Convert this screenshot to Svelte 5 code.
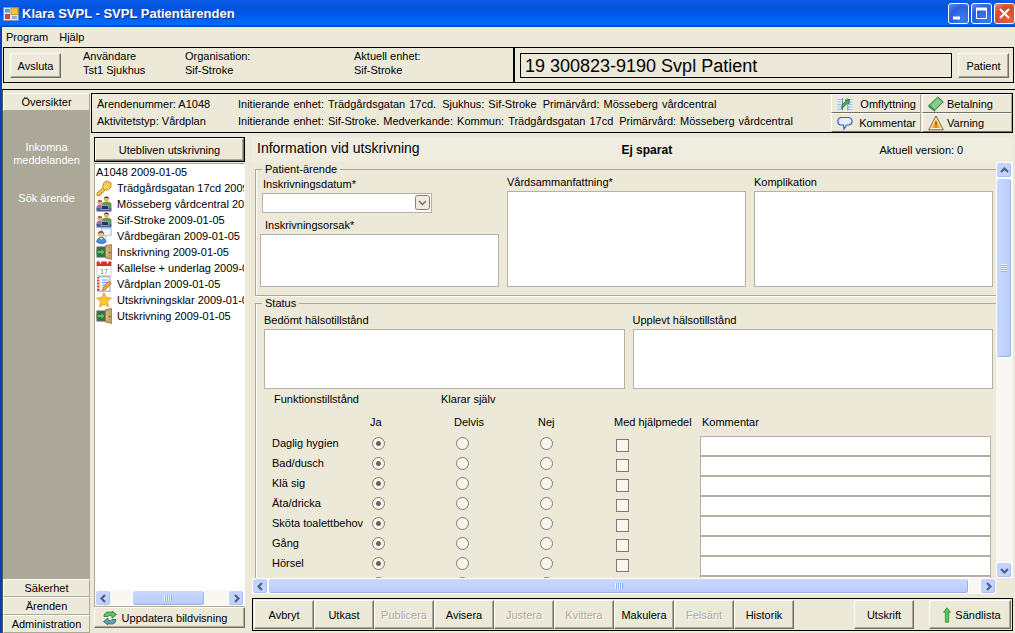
<script lang="ts">
    type TreeItem = { icon: string; text: string };
    type Action = { text: string; disabled?: boolean };

    const tree: TreeItem[] = [
        { icon: "key", text: "Trädgårdsgatan 17cd 2009-01-05" },
        { icon: "people", text: "Mösseberg vårdcentral 2009-01-05" },
        { icon: "people", text: "Sif-Stroke 2009-01-05" },
        { icon: "request", text: "Vårdbegäran 2009-01-05" },
        { icon: "door", text: "Inskrivning 2009-01-05" },
        { icon: "calendar", text: "Kallelse + underlag 2009-01-05" },
        { icon: "plan", text: "Vårdplan 2009-01-05" },
        { icon: "star", text: "Utskrivningsklar 2009-01-05" },
        { icon: "door", text: "Utskrivning 2009-01-05" },
    ];

    const actions: Action[] = [
        { text: "Avbryt" },
        { text: "Utkast" },
        { text: "Publicera", disabled: true },
        { text: "Avisera" },
        { text: "Justera", disabled: true },
        { text: "Kvittera", disabled: true },
        { text: "Makulera" },
        { text: "Felsänt", disabled: true },
        { text: "Historik" },
    ];

    const levels = ["Ja", "Delvis", "Nej"];

    let functions = $state(
        ["Daglig hygien", "Bad/dusch", "Klä sig", "Äta/dricka", "Sköta toalettbehov", "Gång", "Hörsel", ""].map((name) => ({
            name,
            level: "Ja",
            aid: false,
            comment: "",
        })),
    );
</script>

{#snippet icon(name: string)}
    <svg class="icon" width="16" height="16" viewBox="0 0 16 16" aria-hidden="true">
        {#if name === "key"}
            <path d="M7.500 7.500 1 13v2.500h3v-1.500h1.500v-1.500H7l2-2.500" fill="#f6c445" stroke="#c58a1c" />
            <path d="M8 2.500 11 .8l4 2.200v4l-3 3H8.500L6.500 7.500z" fill="#fbd35c" stroke="#c58a1c" />
            <circle cx="11.500" cy="4" r="1.300" fill="#fff" stroke="#c58a1c" stroke-width=".6" />
        {:else if name === "people"}
            <circle cx="10.500" cy="3.200" r="2.600" fill="#e9b27c" />
            <path d="M7.800 3c0-3.500 5.500-3.500 5.500 0l-1-1H9z" fill="#5b3a22" />
            <path d="M6 12V8c0-3 9.500-3 9.500 0v4z" fill="#5d9b4d" />
            <circle cx="4" cy="6.500" r="2.400" fill="#e3a772" />
            <path d="M1.600 6.300c0-3 4.700-3 4.700 0L5.500 5.500h-3z" fill="#8a4a24" />
            <path d="M.5 13v-2c0-3 7-3 7 0v2z" fill="#b06ca0" />
            <path d="M.5 12h15v3.500H.5z" fill="#4a5d9a" />
            <path d="M6 9.500h6l1 4H5z" fill="#26335f" stroke="#a9b9e6" stroke-width=".7" />
        {:else if name === "request"}
            <path d="M5 .7h10.300v6.500H12L9.500 9.500V7.200H7z" fill="#eef6ff" stroke="#8fb4de" stroke-width=".8" />
            <circle cx="5" cy="6.500" r="3" fill="#edbd8a" />
            <path d="M2 6.500c-.5-5 6.500-5 6 0L6.500 5h-3z" fill="#8a5a30" />
            <path d="M.7 14c0-6 9.300-6 9.300 0-2 2-7 2-9.300 0z" fill="#4f8be0" stroke="#2a5cab" stroke-width=".7" />
            <path d="m4 10 1.300 1.800L6.700 10z" fill="#fff" />
        {:else if name === "door"}
            <path d="M.5 2.500h9v11h-9z" fill="#55635a" />
            <path d="M9.500 1.500 15.500.5v15l-6-1.500z" fill="#c9a56a" stroke="#87683a" stroke-width=".7" />
            <path d="M11 4v8" stroke="#e5ca98" />
            <circle cx="13.700" cy="8.500" r=".8" fill="#6b4d20" />
            <path d="m9 8-4-4v2.300H1v3.400h4V12z" fill="#53c653" stroke="#1b6a25" stroke-width=".8" />
        {:else if name === "calendar"}
            <path d="M1 2h14v13.500H1z" fill="#fff" stroke="#c9c2c2" stroke-width=".8" />
            <path d="M.7 1.500h14.600V6H.7z" fill="#d92c2c" />
            <path d="M4.500.5v3M11.500.5v3" stroke="#fff" stroke-width="1.500" />
            <text x="8" y="13.500" text-anchor="middle" font-size="7" fill="#777">17</text>
        {:else if name === "plan"}
            <path d="M2.500.8H14v14.400H2.500z" fill="#fff" stroke="#8e9bb8" />
            <path d="M1 1h2.500v14H1z" fill="#d0483b" />
            <path d="M1 3h3M1 6h3M1 9h3M1 12h3" stroke="#fff" />
            <path d="M6 4h6M6 6.500h6M6 9h3" stroke="#6b9be0" />
            <path d="m6.500 14.500.8-3.500 5.500-6 2.500 2.300-5.500 6z" fill="#f4a43c" stroke="#a9601b" stroke-width=".7" />
        {:else if name === "star"}
            <path d="m8 .8 2.200 4.700 5.100.6-3.800 3.500 1 5.200L8 12.300l-4.500 2.500 1-5.200L.7 6.100l5.100-.6z" fill="#fcc62f" stroke="#dc9a18" stroke-width=".8" />
        {:else if name === "move"}
            <path d="M.5 2H6v12.500H.5zM10 2h5.500v12.500H10z" fill="#e6effa" />
            <path d="M.5 3.500h5M.5 6h5M.5 8.500h4M.5 11h4M.5 13.500h4M11 3.500h4.500M11 6h4.500M11 8.500h4.500M11 11h4.500M11 13.500h4.500" stroke="#9cbfe3" />
            <path d="M5.500 2v12.500M10.800 2v12.500" stroke="#6b8fb5" />
            <path d="m4.500 13 .5-4 4-4-1-1 4.500-.5L12 8l-1.200-1.200-4 4z" fill="#4fa457" stroke="#246b33" stroke-width=".7" />
        {:else if name === "money"}
            <path d="m.8 9.500 9-8.500 5.500 4.800-8.500 8.500z" fill="#73bd7b" stroke="#33804a" />
            <path d="m.8 9.500 6 4.800v1.200L.8 11z" fill="#3f8d54" stroke="#33804a" stroke-width=".6" />
            <path d="m4 9.500 6-5.500 2.500 2.300-5.700 5.500z" fill="#8acb8c" stroke="#a5d8a4" stroke-width=".7" />
        {:else if name === "comment"}
            <path d="M3.500 2.500h9c4 2 3 6.500-.5 7.500H9.500L7 14l-.5-4h-3C0 9 0 4 3.500 2.500z" fill="#e6f1ff" stroke="#3361d0" stroke-width="1.200" />
        {:else if name === "warning"}
            <path d="m8 1 7.300 13.800H.7z" fill="#fff6d8" stroke="#7c5e4d" />
            <path d="m8 4 4.700 9H3.300z" fill="#f8ad32" />
            <path d="M8 6.500v3.700M8 11v1.500" stroke="#8a5300" stroke-width="1.300" />
        {:else if name === "refresh"}
            <path d="M2 6.500C2 2 7 .8 10 3V1l4.500 3.500L10 8V6C8 5 6.500 5.500 6 6.500z" fill="#5fc25a" stroke="#277a3b" stroke-width=".8" />
            <path d="M14 9.500c0 4.500-5 5.700-8 3.500v2l-4.500-3.500L6 8v2c2 1 3.500.5 4-.5z" fill="#5ba8a5" stroke="#255d71" stroke-width=".8" />
        {:else if name === "up"}
            <path d="m8 .8 3.500 4.400H9.700v10H6.300v-10H4.500z" fill="#59c452" stroke="#2f8f35" stroke-width=".8" />
        {:else if name === "app"}
            <path d="M.5 1.500h15v13H.5z" fill="#dfe6f5" stroke="#8393b5" />
            <path d="M2 3h5v3.500H2z" fill="#6d93da" />
            <path d="M2 8h5v5H2z" fill="#c74334" />
            <path d="M8 2h7v6.500H8z" fill="#f6c938" stroke="#b07e18" stroke-width=".7" />
            <path d="M9 10h5v3H9z" fill="#8fa8d8" />
        {/if}
    </svg>
{/snippet}

{#snippet arrow(direction: string, label: string)}
    <button class="arrow" aria-label={label}>
        <svg class={direction} width="9" height="9" viewBox="0 0 9 9" aria-hidden="true">
            <path d="m1 6 3.500-3.500L8 6" fill="none" stroke="#4d6185" stroke-width="2.200" />
        </svg>
    </button>
{/snippet}

<div class="window">
    <header class="title">
        {@render icon("app")}
        <h1>Klara SVPL - SVPL Patientärenden</h1>
        <button aria-label="Minimera"><svg width="19" height="19" viewBox="0 0 19 19"><path d="M4 14h7" stroke="#fff" stroke-width="3" /></svg></button>
        <button aria-label="Maximera"><svg width="19" height="19" viewBox="0 0 19 19"><path d="M4.500 5v9.500h10V5M4 5.500h11" fill="none" stroke="#fff" /><path d="M4 5h11" stroke="#fff" stroke-width="3" /></svg></button>
        <button class="close" aria-label="Stäng"><svg width="19" height="19" viewBox="0 0 19 19"><path d="m5 5 9 9M14 5l-9 9" stroke="#fff" stroke-width="2" /></svg></button>
    </header>

    <div class="client">
        <nav class="menu">
            <button>Program</button>
            <button>Hjälp</button>
        </nav>

        <section class="session">
            <div class="user">
                <button class="raised">Avsluta</button>
                <p>Användare<br />Tst1 Sjukhus</p>
                <p>Organisation:<br />Sif-Stroke</p>
                <p>Aktuell enhet:<br />Sif-Stroke</p>
            </div>
            <div class="patient">
                <output>19 300823-9190 Svpl Patient</output>
                <button class="raised">Patient</button>
            </div>
        </section>

        <div class="workspace">
            <nav class="side">
                <button class="raised">Översikter</button>
                <div class="links">
                    <a href="#inkomna">Inkomna meddelanden</a>
                    <a href="#sok">Sök ärende</a>
                </div>
                <button class="raised">Säkerhet</button>
                <button class="raised">Ärenden</button>
                <button class="raised">Administration</button>
            </nav>

            <main>
                <section class="case">
                    <div class="case-id">
                        <span>Ärendenummer: A1048</span>
                        <span>Aktivitetstyp: Vårdplan</span>
                    </div>
                    <div class="case-units">
                        <div><span>Initierande</span><span>enhet:</span><span>Trädgårdsgatan</span><span>17cd.</span><span class="part">Sjukhus:</span><span>Sif-Stroke</span><span class="part">Primärvård:</span><span>Mösseberg</span><span>vårdcentral</span></div>
                        <div><span>Initierande</span><span>enhet:</span><span>Sif-Stroke.</span><span>Medverkande:</span><span>Kommun:</span><span>Trädgårdsgatan</span><span>17cd</span><span class="part">Primärvård:</span><span>Mösseberg</span><span>vårdcentral</span></div>
                    </div>
                    <div class="case-buttons">
                        <button class="raised">{@render icon("move")}<span>Omflyttning</span></button>
                        <button class="raised">{@render icon("money")}<span>Betalning</span></button>
                        <button class="raised">{@render icon("comment")}<span>Kommentar</span></button>
                        <button class="raised">{@render icon("warning")}<span>Varning</span></button>
                    </div>
                </section>

                <div class="columns">
                    <section class="history">
                        <div class="framed"><button class="raised">Utebliven utskrivning</button></div>
                        <div class="tree">
                            <ul>
                                <li>A1048 2009-01-05</li>
                                {#each tree as item}
                                    <li>{@render icon(item.icon)}<span>{item.text}</span></li>
                                {/each}
                            </ul>
                            <div class="scroll horizontal">
                                {@render arrow("left", "Bläddra trädet åt vänster")}
                                <div class="track"><div class="thumb" style="margin-left: 18%; width: 62%"><i></i></div></div>
                                {@render arrow("right", "Bläddra trädet åt höger")}
                            </div>
                        </div>
                        <button class="raised update">{@render icon("refresh")}Uppdatera bildvisning</button>
                    </section>

                    <section class="detail">
                        <div class="heading">
                            <h2>Information vid utskrivning</h2>
                            <strong>Ej sparat</strong>
                            <span>Aktuell version: 0</span>
                        </div>

                        <div class="viewport">
                            <form>
                                <fieldset>
                                    <legend>Patient-ärende</legend>
                                    <div class="three">
                                        <div class="stack first">
                                            <label for="datum">Inskrivningsdatum*</label>
                                            <div class="combo">
                                                <select id="datum"><option></option></select>
                                                <svg width="15" height="15" viewBox="0 0 15 15" aria-hidden="true">
                                                    <rect x=".5" y=".5" width="14" height="14" rx="2" fill="#f1e9e2" stroke="#8d7b72" />
                                                    <path d="m4 6 3.500 3.500L11 6" fill="none" stroke="#75675f" stroke-width="1.300" />
                                                </svg>
                                            </div>
                                            <label class="next" for="orsak">Inskrivningsorsak*</label>
                                            <textarea id="orsak"></textarea>
                                        </div>
                                        <div class="stack">
                                            <label for="samman">Vårdsammanfattning*</label>
                                            <textarea id="samman"></textarea>
                                        </div>
                                        <div class="stack">
                                            <label for="komp">Komplikation</label>
                                            <textarea id="komp"></textarea>
                                        </div>
                                    </div>
                                </fieldset>

                                <fieldset class="status">
                                    <legend>Status</legend>
                                    <div class="two">
                                        <div class="stack">
                                            <label for="bedomt">Bedömt hälsotillstånd</label>
                                            <textarea id="bedomt"></textarea>
                                        </div>
                                        <div class="stack">
                                            <label for="upplevt">Upplevt hälsotillstånd</label>
                                            <textarea id="upplevt"></textarea>
                                        </div>
                                    </div>

                                    <table>
                                        <colgroup>
                                            <col class="name" /><col class="level" /><col class="level" /><col class="nej" /><col class="aid" /><col />
                                        </colgroup>
                                        <thead>
                                            <tr class="group">
                                                <th>Funktionstillstånd</th>
                                                <th class="self" colspan="5">Klarar själv</th>
                                            </tr>
                                            <tr>
                                                <td></td>
                                                {#each levels as level}
                                                    <th>{level}</th>
                                                {/each}
                                                <th class="flush">Med hjälpmedel</th>
                                                <th>Kommentar</th>
                                            </tr>
                                        </thead>
                                        <tbody>
                                            {#each functions as row, i}
                                                <tr>
                                                    <th scope="row">{row.name}</th>
                                                    {#each levels as level}
                                                        <td><input type="radio" name="level-{i}" value={level} aria-label="{row.name}: {level}" bind:group={row.level} /></td>
                                                    {/each}
                                                    <td><input type="checkbox" aria-label="{row.name}: Med hjälpmedel" bind:checked={row.aid} /></td>
                                                    <td><input type="text" aria-label="{row.name}: Kommentar" bind:value={row.comment} /></td>
                                                </tr>
                                            {/each}
                                        </tbody>
                                    </table>
                                </fieldset>
                            </form>
                            <div class="scroll vertical">
                                {@render arrow("up", "Bläddra uppåt")}
                                <div class="track"><div class="thumb" style="height: 47%"><i></i></div></div>
                                {@render arrow("down", "Bläddra nedåt")}
                            </div>
                            <div class="scroll horizontal">
                                {@render arrow("left", "Bläddra åt vänster")}
                                <div class="track"><div class="thumb" style="width: 98.5%"><i></i></div></div>
                                {@render arrow("right", "Bläddra åt höger")}
                            </div>
                        </div>

                        <footer>
                            {#each actions as action}
                                <button class="raised" disabled={action.disabled}>{action.text}</button>
                            {/each}
                            <button class="raised print">Utskrift</button>
                            <button class="raised send">{@render icon("up")}Sändlista</button>
                        </footer>
                    </section>
                </div>
            </main>
        </div>
    </div>
</div>

<style>
    :global(body) {
        margin: 0;
    }

    .window {
        --face: #ece9d8;
        --shade: #aca899;
        --dark: #716f64;
        height: 100vh;
        display: flex;
        flex-direction: column;
        overflow: hidden;
        background: var(--face);
        color: #000;
        font: 11px/14px "Liberation Sans", Arial, sans-serif;
    }

    .window * {
        box-sizing: border-box;
    }

    button,
    input,
    select,
    textarea {
        font: inherit;
        color: inherit;
        margin: 0;
        padding: 0;
        border-radius: 0;
    }

    h1,
    h2,
    p,
    ul {
        margin: 0;
        padding: 0;
        list-style: none;
    }

    .icon {
        display: block;
        flex: none;
    }

    .raised {
        display: flex;
        align-items: center;
        justify-content: center;
        background: var(--face);
        border: 1px solid;
        border-color: #fff var(--dark) var(--dark) #fff;
        box-shadow: inset -1px -1px var(--shade);
        white-space: nowrap;
    }

    .raised:disabled {
        color: var(--shade);
        text-shadow: 1px 1px #fff;
    }

    .title {
        flex: none;
        height: 27px;
        display: flex;
        align-items: center;
        gap: 2px;
        padding-left: 3px;
        background: linear-gradient(#0a5ce8, #0453dc 30%, #0058ee 55%, #0366fb 80%, #0366fb 90%, #0142bb);
    }

    .title h1 {
        flex: 1;
        padding-left: 1px;
        color: #fff;
        font: bold 13px/18px "Liberation Sans", Arial, sans-serif;
        text-shadow: 1px 1px #0a2f8c;
    }

    .title button {
        width: 21px;
        height: 21px;
        border: 1px solid #fff;
        border-radius: 3px;
        background: radial-gradient(circle at 70% 80%, #3c7df2, #2a5fdc 60%, #5c8df0);
    }

    .title button svg {
        display: block;
    }

    .title .close {
        background: radial-gradient(circle at 70% 80%, #e8603c, #d8492a 60%, #ee8c70);
    }

    .client {
        flex: 1;
        min-height: 0;
        display: flex;
        flex-direction: column;
        border-left: 2px solid #0a3fb8;
    }

    .menu {
        flex: none;
        height: 20px;
        display: flex;
        gap: 11px;
        padding-left: 4px;
    }

    .menu button {
        border: 0;
        background: none;
    }

    .session {
        flex: none;
        display: flex;
        height: 36px;
        margin: 0 1px 6px;
        border: 1px solid #000;
    }

    .user {
        flex: 36;
        display: grid;
        grid-template-columns: 73px 102px 169px 1fr;
        padding: 1px 0 0 6px;
    }

    .user .raised {
        width: 51px;
        height: 25px;
        margin-top: 4px;
    }

    .patient {
        flex: 35;
        display: flex;
        gap: 6px;
        padding: 5px 4px 4px 5px;
        border-left: 2px solid #000;
    }

    .patient output {
        flex: 1;
        border: 1px solid #000;
        padding-left: 4px;
        font-size: 18px;
        line-height: 24px;
    }

    .patient .raised {
        width: 51px;
    }

    .workspace {
        flex: 1;
        min-height: 0;
        display: flex;
        gap: 1px;
        padding: 3px 2px 0 0;
        border-top: 1px solid #000;
        border-left: 1px solid #555;
    }

    .side {
        flex: none;
        width: 87px;
        display: flex;
        flex-direction: column;
    }

    .side .raised {
        height: 18px;
        border-color: #fff var(--shade) var(--shade) #fff;
        box-shadow: none;
    }

    .side .links {
        flex: 1;
        display: flex;
        flex-direction: column;
        gap: 25px;
        padding-top: 30px;
        background: var(--shade);
    }

    .side a {
        color: #fff;
        line-height: 13px;
        text-align: center;
        text-decoration: none;
    }

    main {
        flex: 1;
        min-width: 0;
        display: flex;
        flex-direction: column;
    }

    .case {
        flex: none;
        display: flex;
        height: 40px;
        padding-left: 5px;
        border: 1px solid #000;
    }

    .case-id,
    .case-units {
        display: flex;
        flex-direction: column;
        padding-top: 2px;
        line-height: 17px;
        white-space: nowrap;
    }

    .case-id {
        width: 141px;
    }

    .case-units {
        flex: 1;
    }

    .case-units div {
        display: flex;
        gap: 4px;
    }

    .case-units .part {
        padding-left: 2px;
    }

    .case-buttons {
        display: grid;
        grid-template-columns: 90px 90px;
        column-gap: 1px;
    }

    .case-buttons .raised {
        justify-content: flex-start;
        padding: 0 4px 0 5px;
        border-color: #fff var(--shade) var(--dark) #fff;
        box-shadow: none;
    }

    .case-buttons .raised span {
        flex: 1;
        text-align: right;
    }

    .case-buttons .raised:nth-child(even) span {
        padding-left: 3px;
        text-align: left;
    }

    .columns {
        flex: 1;
        min-height: 0;
        display: flex;
        gap: 7px;
        padding: 4px 0 2px 3px;
    }

    .history {
        flex: none;
        width: 151px;
        display: flex;
        flex-direction: column;
        padding-bottom: 3px;
    }

    .framed {
        border: 1px solid #000;
    }

    .framed .raised {
        width: 100%;
        height: 23px;
    }

    .tree {
        flex: 1;
        min-height: 0;
        display: flex;
        flex-direction: column;
        margin-top: 1px;
        border: 1px solid var(--shade);
        border-right-color: #fff;
        background: #fff;
    }

    .tree ul {
        flex: 1;
        overflow: hidden;
    }

    .tree li {
        height: 16px;
        display: flex;
        align-items: center;
        gap: 5px;
        padding-left: 1px;
        white-space: nowrap;
    }

    .update {
        height: 21px;
        gap: 4px;
        padding-right: 10px;
    }

    .detail {
        flex: 1;
        min-width: 0;
        display: flex;
        flex-direction: column;
    }

    .heading {
        flex: none;
        height: 25px;
        display: grid;
        grid-template-columns: 363fr 257fr 133fr;
        align-items: center;
        padding: 0 0 3px 5px;
        background: #efede0;
    }

    .heading h2 {
        font-size: 14px;
        font-weight: normal;
        line-height: 18px;
    }

    .heading strong {
        padding-top: 4px;
        font-size: 12px;
    }

    .heading span {
        padding-top: 3px;
        white-space: nowrap;
    }

    .viewport {
        flex: 1;
        min-height: 0;
        display: grid;
        grid-template: minmax(0, 1fr) 16px / minmax(0, 1fr) 17px;
        margin-bottom: 4px;
    }

    form {
        overflow: hidden;
        padding-left: 3px;
    }

    fieldset {
        min-width: 0;
        margin: 0;
        padding: 0 3px 8px 4px;
        border: 1px solid var(--shade);
        border-right: 0;
        box-shadow: inset 1px 0 #fff, 0 1px #fff;
    }

    legend {
        margin-left: 2px;
        padding: 0 3px;
        line-height: 14px;
    }

    .three {
        display: grid;
        grid-template-columns: repeat(3, minmax(0, 1fr));
        gap: 8px;
        height: 111px;
    }

    .two {
        display: grid;
        grid-template-columns: repeat(2, minmax(0, 1fr));
        gap: 8px;
        height: 79px;
        padding: 4px 0 0 4px;
    }

    .stack {
        display: flex;
        flex-direction: column;
        gap: 3px;
    }

    .stack.first {
        padding-top: 2px;
    }

    label {
        line-height: 12px;
    }

    .first label {
        padding-left: 3px;
    }

    .first .next {
        padding: 3px 0 0 5px;
    }

    textarea,
    select,
    input[type="text"] {
        display: block;
        width: 100%;
        border: 1px solid #b8b0a4;
        background: #fff;
        outline: none;
    }

    textarea {
        flex: 1;
        min-height: 0;
        resize: none;
    }

    .combo {
        position: relative;
        width: 71%;
        margin-left: 2px;
    }

    .combo select {
        height: 20px;
        appearance: none;
    }

    .combo svg {
        position: absolute;
        top: 2px;
        right: 2px;
        pointer-events: none;
    }

    table {
        width: 100%;
        padding: 2px 2px 0 12px;
        table-layout: fixed;
        border-spacing: 0;
    }

    .name {
        width: 96px;
    }

    .level {
        width: 84px;
    }

    .nej {
        width: 78px;
    }

    .aid {
        width: 86px;
    }

    th,
    td {
        height: 20px;
        padding: 0;
        font-weight: normal;
        text-align: left;
        vertical-align: top;
        white-space: nowrap;
    }

    thead th {
        height: 29px;
        padding-left: 2px;
        vertical-align: middle;
    }

    thead .group th {
        height: 16px;
    }

    thead .flush {
        padding-left: 0;
    }

    thead .group .self {
        padding-left: 73px;
    }

    input[type="radio"],
    input[type="checkbox"] {
        display: block;
        width: 13px;
        height: 13px;
        appearance: none;
        border: 1px solid #85786f;
        background: #fbf5f0;
    }

    input[type="radio"] {
        margin: 1px 4px;
        border-radius: 50%;
    }

    input[type="radio"]:checked {
        background: radial-gradient(circle, #6e625b 2px, #fbf5f0 3px);
    }

    input[type="checkbox"] {
        margin: 3px 2px;
    }

    input[type="checkbox"]:checked {
        background: #6e625b;
    }

    input[type="text"] {
        height: 20px;
    }

    .scroll {
        display: flex;
        background: #f8f7f2;
    }

    .scroll.horizontal {
        height: 16px;
    }

    .vertical {
        flex-direction: column;
    }

    .arrow {
        flex: none;
        width: 16px;
        height: 16px;
        display: flex;
        align-items: center;
        justify-content: center;
        border: 1px solid #fff;
        border-radius: 3px;
        background: #c3d3fd;
        box-shadow: inset -1px -1px #a9bdf0;
    }

    .right {
        transform: rotate(90deg);
    }

    .down {
        transform: rotate(180deg);
    }

    .left {
        transform: rotate(270deg);
    }

    .track {
        flex: 1;
        min-width: 0;
        min-height: 0;
        display: flex;
    }

    .thumb {
        display: flex;
        align-items: center;
        justify-content: center;
        border: 1px solid #fff;
        border-radius: 3px;
        background: linear-gradient(#c9d8fe, #b9cbfb);
        box-shadow: inset -1px -1px #98b1e4;
    }

    .vertical .thumb {
        width: 16px;
        background: linear-gradient(90deg, #c9d8fe, #b9cbfb);
    }

    .thumb i {
        width: 8px;
        height: 6px;
        background: repeating-linear-gradient(90deg, #eef4fe 0 1px, #8cb0f8 1px 2px);
    }

    .vertical .thumb i {
        width: 6px;
        height: 8px;
        background: repeating-linear-gradient(#eef4fe 0 1px, #8cb0f8 1px 2px);
    }

    footer {
        flex: none;
        height: 33px;
        display: flex;
        padding: 1px;
        border: 1px solid #000;
    }

    footer .raised {
        width: 60px;
    }

    footer .print {
        margin: 0 15px 0 auto;
    }

    footer .send {
        width: 82px;
    }
</style>
